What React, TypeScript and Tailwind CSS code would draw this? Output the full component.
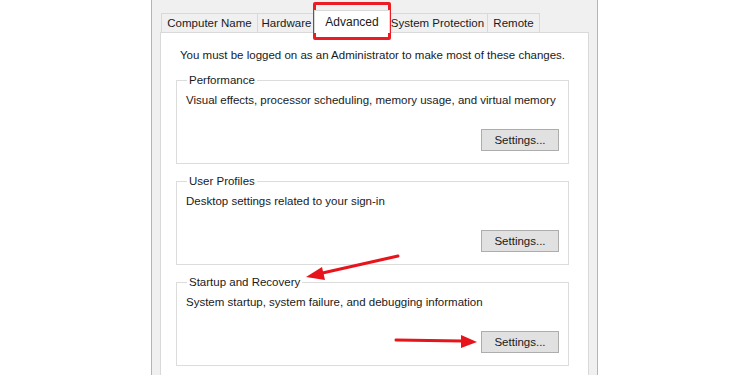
import type { ReactNode } from 'react';

// System Properties → Advanced tab, with the tutorial's red annotations on top.
const TABS = ['Computer Name', 'Hardware', 'Advanced', 'System Protection', 'Remote'];
const TAB_WIDTH: Record<string, string> = {
  'Computer Name': 'w-[97px]',
  Hardware: 'w-[58px]',
  'System Protection': 'w-[100px]',
  Remote: 'w-[52px]',
};

function Tab({ label }: { label: string }) {
  if (label === 'Advanced') {
    return (
      <div className="relative z-10 -mx-[2px] -mt-[3px] h-[23px] w-[76px] border border-b-0 border-[#d9d9d9] bg-white pt-[2px] text-center text-[12px]">
        {label}
      </div>
    );
  }
  return (
    <div className={`${TAB_WIDTH[label]} h-[20px] border border-l-0 border-[#d9d9d9] bg-[#f0f0f0] pt-[1px] text-center first:border-l`}>
      {label}
    </div>
  );
}

function Group({ title, desc }: { title: string; desc: ReactNode }) {
  return (
    <fieldset className="ml-[15px] w-[393px] border border-[#dcdcdc] px-[9px] pb-[12px]">
      <legend className="ml-[1px] px-[2px] leading-[15px]">{title}</legend>
      <div className="mt-[5px] leading-[15px]">{desc}</div>
      <div className="mt-[21px] flex justify-end">
        <button className="h-[22px] w-[78px] border border-[#adadad] bg-[#e1e1e1] text-center leading-[20px]">
          Settings...
        </button>
      </div>
    </fieldset>
  );
}

export default function App() {
  return (
    <div className="relative h-[375px] w-[750px] overflow-hidden bg-white font-['Liberation_Sans',Arial,sans-serif] text-[11.5px] text-[#1a1a1a]">
      <div className="ml-[151px] h-full w-[447px] border-x border-[#b4b4b4] bg-[#f0f0f0] px-[8px] pt-[13px]">
        <div className="flex h-[20px] pl-[1px]">
          {TABS.map((t) => (
            <Tab key={t} label={t} />
          ))}
        </div>
        <div className="-mt-px h-[360px] w-[429px] border border-[#d9d9d9] bg-white">
          <p className="ml-[19px] mt-[15px] leading-[15px]">
            You must be logged on as an Administrator to make most of these changes.
          </p>
          <div className="mt-[10px] flex flex-col gap-[10px]">
            <Group title="Performance" desc="Visual effects, processor scheduling, memory usage, and virtual memory" />
            <Group title="User Profiles" desc="Desktop settings related to your sign-in" />
            <Group title="Startup and Recovery" desc="System startup, system failure, and debugging information" />
          </div>
        </div>
      </div>

      {/* annotations */}
      <div className="absolute left-[313px] top-[2px] h-[38px] w-[78px] rounded-[2px] border-[3px] border-[#ec1c24]" />
      <svg className="pointer-events-none absolute left-0 top-0" width="750" height="375">
        <line x1="398" y1="256" x2="318" y2="274" stroke="#e8141b" strokeWidth="3" strokeLinecap="round" />
        <polygon points="306,277 322,267 325,280" fill="#e8141b" />
        <line x1="396" y1="340" x2="462" y2="341" stroke="#e8141b" strokeWidth="3" strokeLinecap="round" />
        <polygon points="477,342 461,335 461,348" fill="#e8141b" />
      </svg>
    </div>
  );
}
